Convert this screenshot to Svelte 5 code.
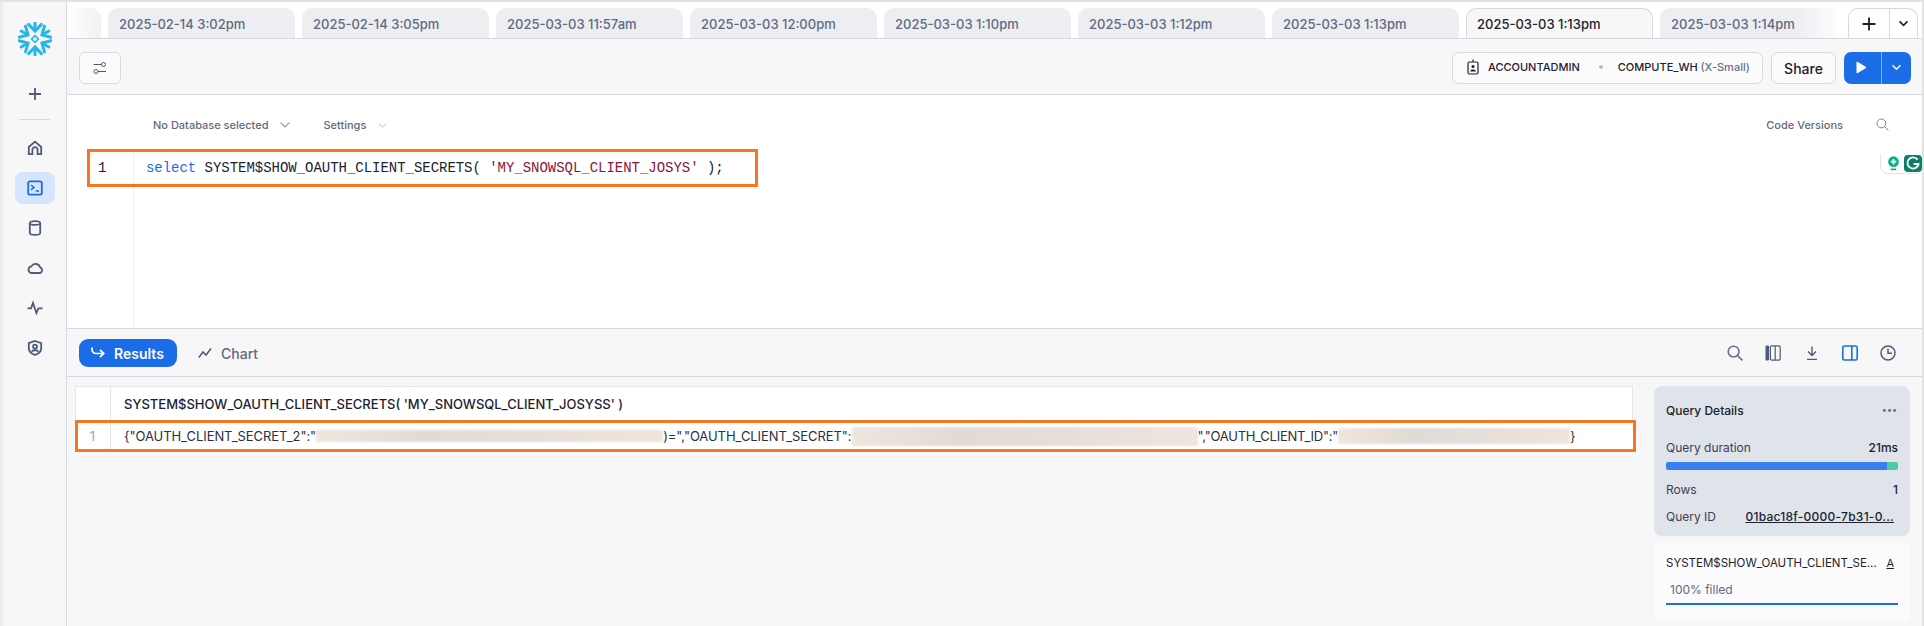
<script>
  const tabs = ['2025-02-14 3:02pm','2025-02-14 3:05pm','2025-03-03 11:57am','2025-03-03 12:00pm','2025-03-03 1:10pm','2025-03-03 1:12pm','2025-03-03 1:13pm','2025-03-03 1:13pm','2025-03-03 1:14pm'];
  const arms = [0,60,120,180,240,300];
</script>

<div class="app">
  <aside class="side">
    <svg class="logo" viewBox="-17 -17 34 34" width="34" height="34">
      {#each arms as a}
        <g transform="rotate({a})">
          <path d="M0 -9.5V-16" class="arm"/>
          <path d="M-6.4 -14.6L0 -8L6.4 -14.6" class="barb"/>
        </g>
      {/each}
      <path d="M0 -3.4L3.4 0L0 3.4L-3.4 0Z" fill="none" stroke="#29b5e8" stroke-width="1.6"/>
    </svg>
    <svg class="plus" viewBox="0 0 14 14" width="14" height="14"><path d="M7 1V13M1 7H13" stroke="#4f5b76" stroke-width="1.8" fill="none"/></svg>
    <div class="sep"></div>
    <nav class="nav">
      <span class="nv"><svg viewBox="0 0 16 16" width="16" height="16"><path d="M1.8 14.2V7L8 1.6L14.2 7V14.2H10.6V9.8A2.6 2.6 0 0 0 5.4 9.8V14.2Z"/></svg></span>
      <span class="nv on"><svg viewBox="0 0 16 16" width="16" height="16"><rect x="1.2" y="1.4" width="13.6" height="13.2" rx="1.8"/><path d="M4 5L7 7.4L4 9.8M8.6 11H12" stroke-width="1.5"/></svg></span>
      <span class="nv"><svg viewBox="0 0 16 16" width="16" height="16"><ellipse cx="8" cy="3" rx="5.2" ry="1.9"/><path d="M2.8 3V13A5.2 1.9 0 0 0 13.2 13V3"/></svg></span>
      <span class="nv"><svg viewBox="0 0 16 16" width="16" height="16"><path d="M4 13H12.4A2.9 2.9 0 0 0 13.2 7.4A4.9 4.9 0 0 0 4.3 6.4A3.4 3.4 0 0 0 4 13Z"/></svg></span>
      <span class="nv"><svg viewBox="0 0 16 16" width="16" height="16"><path d="M0.5 8.4H4L6 3L9.4 13L11.4 8.4H15.5"/></svg></span>
      <span class="nv"><svg viewBox="0 0 16 16" width="16" height="16"><path d="M8 1L14.2 3.2V8C14.2 11.6 11 14 8 15C5 14 1.8 11.6 1.8 8V3.2Z"/><circle cx="8" cy="6.6" r="2"/><path d="M4.6 11.6C5.4 9.8 10.6 9.8 11.4 11.6"/></svg></span>
    </nav>
  </aside>

  <main class="main">
    <div class="tabbar">
      <div class="tabs">
        <div class="tab stub"></div>
        {#each tabs as t, i}
          <div class="tab" class:active={i === 7} class:last={i === 8}>{t}</div>
        {/each}
      </div>
      <div class="addbox">
        <span class="addp"><svg viewBox="0 0 14 14" width="14" height="14"><path d="M7 0.5V13.5M0.5 7H13.5" stroke="#1c2230" stroke-width="1.8" fill="none"/></svg></span>
        <span class="addc"><svg viewBox="0 0 12 8" width="11" height="7"><path d="M1.5 1.5L6 6L10.5 1.5" stroke="#1c2230" stroke-width="1.9" fill="none"/></svg></span>
      </div>
    </div>

    <div class="toolbar">
      <button class="filter" aria-label="Filters">
        <svg viewBox="0 0 14 14" width="14" height="14" fill="none" stroke="#4f5b76" stroke-width="1"><path d="M0.5 3.5H8.5M13 10.5H5"/><circle cx="10.5" cy="3.5" r="2"/><circle cx="3" cy="10.5" r="2"/></svg>
      </button>
      <div class="grow"></div>
      <div class="ctx">
        <svg viewBox="0 0 12 16" width="12" height="16" fill="none" stroke="#1c2230" stroke-width="1.2"><rect x="1" y="3" width="10" height="12" rx="1.5"/><path d="M6 0.5V3"/><circle cx="6" cy="7.4" r="1.5" fill="#1c2230" stroke="none"/><path d="M3.2 12.4C3.4 10 8.6 10 8.8 12.4Z" fill="#1c2230" stroke="none"/></svg>
        <span class="role">ACCOUNTADMIN</span>
        <span class="dot"></span>
        <span class="role">COMPUTE_WH <em>(X-Small)</em></span>
      </div>
      <button class="share">Share</button>
      <div class="run">
        <span class="runp"><svg viewBox="0 0 11 13" width="11" height="13"><path d="M1 1L10 6.5L1 12Z" fill="#fff" stroke="#fff" stroke-linejoin="round" stroke-width="1"/></svg></span>
        <span class="runc"><svg viewBox="0 0 12 8" width="11" height="7"><path d="M1.5 1.5L6 6L10.5 1.5" stroke="#fff" stroke-width="1.8" fill="none"/></svg></span>
      </div>
    </div>

    <section class="editor">
      <div class="edhead">
        <span class="ehl db">No Database selected</span>
        <svg class="chev1" viewBox="0 0 10 6" width="10" height="6"><path d="M0.6 0.6L5 5L9.4 0.6" stroke="#8b93a7" stroke-width="1.2" fill="none"/></svg>
        <span class="ehl st">Settings</span>
        <svg class="chev2" viewBox="0 0 10 6" width="9" height="5"><path d="M0.6 0.6L5 5L9.4 0.6" stroke="#a6adbd" stroke-width="1" fill="none"/></svg>
        <div class="grow"></div>
        <span class="ehl">Code Versions</span>
        <svg class="esearch" viewBox="0 0 13 13" width="13" height="13" fill="none" stroke="#7a8398" stroke-width="1"><circle cx="5.4" cy="5.4" r="4.4"/><path d="M8.6 8.6L12.4 12.4"/></svg>
      </div>
      <div class="codewrap">
        <div class="gutterline"></div>
        <div class="codeline">
          <span class="ln">1</span>
          <code><span class="kw">select</span> SYSTEM$SHOW_OAUTH_CLIENT_SECRETS( <span class="str">'MY_SNOWSQL_CLIENT_JOSYS'</span> );</code>
        </div>
      </div>
      <div class="gram">
        <svg class="bulb" viewBox="0 0 12 16" width="11" height="15"><circle cx="6" cy="6" r="5.8" fill="#00b18b"/><path d="M6 3V9M3 6H9" stroke="#fff" stroke-width="2"/><path d="M3 14.4H9" stroke="#00b18b" stroke-width="1.8"/></svg>
        <svg viewBox="0 0 18 17" width="18" height="17"><rect width="18" height="17" rx="4" fill="#0d7f69"/><path d="M13.6 4.6A5.6 5.6 0 1 0 14.6 9H9.6" fill="none" stroke="#fff" stroke-width="1.8"/></svg>
      </div>
    </section>

    <div class="resbar">
      <button class="results">
        <svg viewBox="0 0 14 12" width="14" height="12" fill="none" stroke="#fff" stroke-width="1.7"><path d="M1 0.5V2.5C1 5 3 6.5 5 6.5H12.5M9 3L12.8 6.5L9 10"/></svg>
        Results
      </button>
      <span class="chart">
        <svg viewBox="0 0 14 12" width="14" height="12" fill="none" stroke="#4f5b76" stroke-width="1.5"><path d="M0.8 10.5L5 5L8 8L13 1.5"/></svg>
        Chart
      </span>
      <div class="grow"></div>
      <div class="tools">
        <svg viewBox="0 0 16 16" width="16" height="16" fill="none" stroke="#66718a" stroke-width="1.6"><circle cx="6.6" cy="6.6" r="5.4"/><path d="M10.6 10.6L15.4 15.4"/></svg>
        <svg viewBox="0 0 16 16" width="16" height="16" fill="none" stroke="#4f5b76" stroke-width="1.2"><rect x="5.4" y="0.8" width="9.8" height="14.4" rx="1.4"/><rect x="0.5" y="0.5" width="3.6" height="15" rx="1.2" fill="#4f5b76" stroke="none"/><path d="M10.2 1V15"/></svg>
        <svg class="dl" viewBox="0 0 12 16" width="12" height="16" fill="none" stroke="#4f5b76" stroke-width="1.4"><path d="M6 1.6V10M2 6.4L6 10.4L10 6.4M1 14.4H11"/></svg>
        <svg class="pn" viewBox="0 0 16 16" width="16" height="16" fill="none" stroke="#1a6ce7" stroke-width="1.6"><rect x="0.8" y="1" width="14.4" height="14" rx="1.6"/><path d="M9.8 1V15"/></svg>
        <svg viewBox="0 0 16 16" width="16" height="16" fill="none" stroke="#4f5b76" stroke-width="1.5"><circle cx="8" cy="8" r="7"/><path d="M8 3.8V8.2H12"/></svg>
      </div>
    </div>

    <div class="content">
      <div class="tablearea">
        <div class="thead">
          <div class="corner"></div>
          <div class="hcell">SYSTEM$SHOW_OAUTH_CLIENT_SECRETS( 'MY_SNOWSQL_CLIENT_JOSYSS' )</div>
        </div>
        <div class="trow">
          <div class="rownum">1</div>
          <div class="rcell">
            <span>{'{'}"OAUTH_CLIENT_SECRET_2":"</span><span class="blur b1"></span><span>)=","OAUTH_CLIENT_SECRET":</span><span class="blur b2"></span><span class="tight">","OAUTH_CLIENT_ID":"</span><span class="blur b3"></span><span>{'}'}</span>
          </div>
        </div>
      </div>
      <aside class="panel">
        <div class="details">
          <div class="dhead"><span class="dtitle">Query Details</span><span class="more">•••</span></div>
          <div class="kv first"><span>Query duration</span><b>21ms</b></div>
          <div class="bar"><span class="bluepart"></span><span class="greenpart"></span></div>
          <div class="kv rows"><span>Rows</span><b>1</b></div>
          <div class="kv qid"><span>Query ID</span><a href="#q">01bac18f-0000-7b31-0...</a></div>
        </div>
        <div class="colcard">
          <div class="chead"><span>SYSTEM$SHOW_OAUTH_CLIENT_SE...</span><u>A</u></div>
          <div class="filled">100% filled</div>
          <div class="fillbar"></div>
        </div>
      </aside>
    </div>
  </main>
</div>

<style>
  :global(body) { margin: 0; background: #fff; }
  * { box-sizing: border-box; }
  .app {
    width: 1924px; height: 626px; display: grid; grid-template-columns: 67px 1fr;
    border-top: 2px solid #e2e2e2; border-right: 2px solid #e2e2e2;
    font-family: Inter, "Liberation Sans", sans-serif; color: #1c2230; overflow: hidden;
  }
  .grow { flex: 1; }
  button { font-family: inherit; }

  .side { background: #f7f7f8; border-right: 1px solid #d5d9e4; border-left: 3px solid #ececec; display: flex; flex-direction: column; align-items: center; padding-top: 20px; }
  .logo { display: block; }
  .arm, .barb { stroke: #29b5e8; fill: none; stroke-width: 3; stroke-linejoin: miter; }
  .arm { stroke-linecap: round; }
  .barb { stroke-linecap: round; }
  .plus { margin-top: 31px; }
  .sep { width: 31px; height: 1px; background: #d5d9e4; margin-top: 18px; }
  .nav { display: flex; flex-direction: column; align-items: center; margin-top: 12px; }
  .nv { width: 40px; height: 32px; margin-bottom: 8px; display: flex; align-items: center; justify-content: center; border-radius: 8px; }
  .nv svg { fill: none; stroke: #4f5b76; stroke-width: 1.8; }
  .nv.on { background: #d6e5fb; }
  .nv.on svg { stroke: #1a6ce7; }

  .main { display: flex; flex-direction: column; min-width: 0; }
  .tabbar { height: 37px; display: flex; border-bottom: 1px solid #d5d9e4; padding-top: 6px; background: #fff; }
  .tabs { display: flex; gap: 7px; flex: 1; min-width: 0; overflow: hidden; }
  .tab { width: 187px; flex: none; height: 31px; background: #eceef2; border-radius: 10px 10px 0 0; font-size: 13px; font-weight: 500; color: #5f6a82; padding: 8px 0 0 11px; white-space: nowrap; }
  .tab.stub { width: 34px; background: linear-gradient(90deg, #fff, #f0f1f4); padding: 0; }
  .tab.active { background: #f7f7f8; color: #1c2230; border: 1px solid #d5d9e4; border-bottom: 1px solid #f7f7f8; padding: 7px 0 0 10px; height: 31px; position: relative; z-index: 1; }
  .tab.last { background: linear-gradient(90deg, #eceef2 0, #eceef2 72%, #fff 100%); }
  .addbox { width: 70px; height: 30px; margin-right: 4px; margin-left: 12px; flex: none; display: flex; border: 1px solid #d5d9e4; border-bottom: 0; border-radius: 10px 10px 0 0; background: #fff; }
  .addp { width: 41px; display: flex; align-items: center; justify-content: center; border-right: 1px solid #d5d9e4; }
  .addc { flex: 1; display: flex; align-items: center; justify-content: center; }

  .toolbar { height: 56px; background: #f7f7f8; border-bottom: 1px solid #d5d9e4; display: flex; align-items: flex-start; padding: 13px 11px 0 12px; }
  .filter { width: 42px; height: 32px; border: 1px solid #d5d9e4; border-radius: 6px; background: #fbfbfc; display: flex; align-items: center; justify-content: center; padding: 0; }
  .ctx { width: 311px; height: 32px; border: 1px solid #d5d9e4; border-radius: 7px; background: #fbfbfc; display: flex; align-items: center; padding: 0 0 2px 14px; font-size: 11px; font-weight: 500; }
  .role { margin-left: 9px; color: #1c2230; white-space: nowrap; }
  .role em { font-style: normal; font-weight: 500; color: #66718a; }
  .dot { width: 4px; height: 4px; border-radius: 50%; background: #b6bdcc; margin: 0 15px 0 19px; }
  .dot + .role { margin-left: 0; }
  .share { width: 65px; height: 32px; margin-left: 8px; border: 1px solid #d5d9e4; border-radius: 7px; background: #fbfbfc; font-size: 14px; font-weight: 500; color: #1c2230; padding: 0; }
  .run { width: 67px; height: 32px; margin-left: 8px; background: #1a6ce7; border-radius: 7px; display: flex; }
  .runp { width: 38px; display: flex; align-items: center; justify-content: center; border-right: 1px solid #7fb0f3; padding-right: 2px; padding-bottom: 1px; }
  .runc { flex: 1; display: flex; align-items: center; justify-content: center; padding-bottom: 2px; }

  .editor { height: 234px; background: #fff; position: relative; display: flex; flex-direction: column; border-bottom: 1px solid #d5d9e4; }
  .edhead { height: 54px; display: flex; align-items: flex-start; padding: 22px 33px 0 86px; font-size: 11px; font-weight: 500; color: #5f6a82; flex: none; }
  .ehl { line-height: 16px; white-space: nowrap; }
  .chev1 { margin: 5px 0 0 12px; }
  .st { margin-left: 33px; }
  .chev2 { margin: 6px 0 0 12px; }
  .esearch { margin: 1px 0 0 33px; }
  .codewrap { position: relative; flex: 1; }
  .gutterline { position: absolute; left: 66px; top: 0; bottom: 0; width: 1px; background: #f0f0f2; }
  .codeline { width: 671px; height: 38px; margin: 0 0 0 20px; border: 3px solid #f47721; display: flex; align-items: center; position: relative; font-family: "Liberation Mono", monospace; font-size: 14px; color: #1c2230; }
  .ln { margin-left: 8px; width: 48px; color: #1c2230; }
  code { font-family: inherit; white-space: pre; letter-spacing: -0.03px; }
  .kw { color: #1a6ce7; }
  .str { color: #8a1538; }
  .gram { position: absolute; right: 0; top: 59px; width: 42px; height: 20px; display: flex; gap: 5px; padding: 1px 0 0 7px; background: #fff; border: 1px solid #dfe3ea; border-top: 0; border-right: 0; border-radius: 0 0 6px 8px; }
  .bulb { margin-top: 1px; }

  .resbar { height: 48px; background: #f7f7f8; border-bottom: 1px solid #d5d9e4; display: flex; align-items: flex-start; padding: 10px 0 0 12px; }
  .results { width: 98px; height: 28px; background: #1a6ce7; border: 0; border-radius: 9px; color: #fff; font-size: 14px; font-weight: 600; display: flex; align-items: center; gap: 9px; padding: 0 0 0 12px; }
  .chart { display: flex; align-items: center; gap: 9px; margin-left: 21px; height: 28px; font-size: 14px; font-weight: 500; color: #5f6a82; }
  .tools { display: flex; align-items: center; gap: 22px; height: 28px; padding-right: 26px; }
  .dl { margin-left: 3px; }
  .pn { margin-left: 2px; }

  .content { flex: 1; background: #f7f7f8; display: flex; padding: 9px 12px 0 8px; min-height: 0; }
  .tablearea { width: 1561px; flex: none; }
  .thead { height: 34px; display: flex; background: #fff; border: 1px solid #e4e6ec; border-bottom: 0; width: 1558px; }
  .corner { width: 35px; border-right: 1px solid #e4e6ec; }
  .hcell { padding: 9px 0 0 13px; font-size: 13px; font-weight: 500; color: #1c2230; white-space: nowrap; }
  .trow { height: 32px; display: flex; background: #fff; border: 3px solid #f47721; }
  .rownum { width: 33px; border-right: 1px solid #e4e6ec; color: #9aa2b4; font-size: 13px; text-align: center; line-height: 26px; padding-right: 3px; }
  .rcell { display: flex; align-items: center; padding-left: 13px; font-size: 13px; color: #2a3142; white-space: nowrap; letter-spacing: -0.06px; }
  .tight { letter-spacing: -0.25px; }
  .blur { display: block; flex: none; background: linear-gradient(90deg, #efe6de, #e2dbd5 30%, #e6ded8 60%, #efe5dc); filter: blur(1px); }
  .b1 { width: 347px; height: 12px; }
  .b2 { width: 346px; height: 19px; }
  .b3 { width: 232px; height: 16px; }

  .panel { margin-left: 18px; width: 256px; flex: none; display: flex; flex-direction: column; gap: 6px; }
  .details { height: 150px; background: #dfe3ea; border-radius: 8px; padding: 0 12px; font-size: 12px; color: #3a4255; }
  .dhead { display: flex; justify-content: space-between; align-items: center; height: 49px; }
  .dtitle { font-weight: 500; font-size: 12px; color: #1c2230; }
  .more { font-size: 9px; color: #5f6a82; margin-right: 1px; padding-bottom: 2px; }
  .kv { display: flex; justify-content: space-between; height: 24px; align-items: center; white-space: nowrap; }
  .kv b { font-weight: 500; color: #1c2230; }
  .kv a { color: #1c2230; font-weight: 500; text-decoration: underline; letter-spacing: 0.25px; margin-right: 4px; }
  .bar { display: flex; height: 8px; border-radius: 2px; overflow: hidden; margin-top: 3px; }
  .bluepart { width: 221px; background: #3a7fef; }
  .greenpart { flex: 1; background: #4fc9a2; }
  .rows { margin-top: 7px; }
  .qid { margin-top: 3px; }
  .colcard { height: 80px; background: #fbfbfb; border-radius: 8px; padding: 12px 12px 0; }
  .chead { display: flex; justify-content: space-between; font-size: 11.5px; font-weight: 400; color: #1c2230; height: 18px; align-items: center; padding-right: 4px; }
  .chead u { font-size: 11px; }
  .filled { font-size: 12px; color: #5f6a82; margin: 10px 0 0 4px; line-height: 16px; }
  .fillbar { height: 2px; background: #1a6ce7; margin-top: 5px; }
</style>
